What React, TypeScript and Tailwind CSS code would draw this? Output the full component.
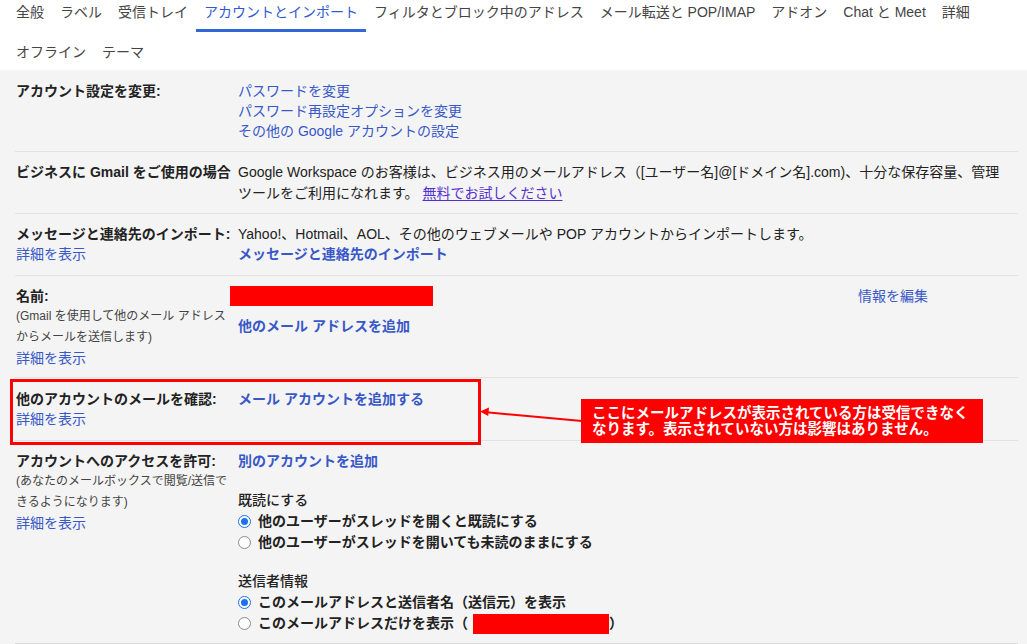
import React from "react";

const tabsTop = ["全般", "ラベル", "受信トレイ", "アカウントとインポート", "フィルタとブロック中のアドレス", "メール転送と POP/IMAP", "アドオン", "Chat と Meet", "詳細"];
const tabsBottom = ["オフライン", "テーマ"];

const link = "text-[#3858c8]";

function Radio({ checked }: { checked?: boolean }) {
  return checked ? (
    <span className="mr-[7px] inline-flex h-[13px] w-[13px] shrink-0 items-center justify-center rounded-full border border-[#1a73e8] bg-white">
      <span className="h-[7px] w-[7px] rounded-full bg-[#1a73e8]" />
    </span>
  ) : (
    <span className="mr-[7px] inline-block h-[13px] w-[13px] shrink-0 rounded-full border border-[#8a8a8a] bg-white" />
  );
}

function More() {
  return <div className={`leading-[20px] ${link}`}>詳細を表示</div>;
}

export default function App() {
  return (
    <div className="relative h-[644px] w-[1027px] overflow-hidden bg-white font-[family-name:Liberation_Sans,Noto_Sans_CJK_JP,sans-serif] text-[14px] text-[#222]">
      {/* tabs */}
      <div className="flex h-[70px] flex-col gap-[8px] pl-2">
        <div className="flex">
          {tabsTop.map((t, i) => (
            <div
              key={t}
              className={`h-[32px] border-b-[3px] px-2 leading-[24px] whitespace-nowrap ${
                i === 3 ? "border-[#3367d6] text-[#2f5bd2]" : "border-transparent text-[#444]"
              }`}
            >
              {t}
            </div>
          ))}
        </div>
        <div className="flex">
          {tabsBottom.map((t) => (
            <div key={t} className="h-[24px] px-2 leading-[24px] text-[#444]">
              {t}
            </div>
          ))}
        </div>
      </div>

      {/* settings */}
      <div className="h-[574px] bg-[#f4f4f4] pl-[15px] pr-[9px]">
        <div className="flex border-b border-[#e2e2e2] pt-[11px] pb-[10px] leading-[20px]">
          <div className="w-[223px] pl-px font-bold">アカウント設定を変更:</div>
          <div className={link}>
            <div>パスワードを変更</div>
            <div>パスワード再設定オプションを変更</div>
            <div>その他の Google アカウントの設定</div>
          </div>
        </div>

        <div className="flex border-b border-[#e2e2e2] pt-[10px] pb-[9px] leading-[21px]">
          <div className="w-[223px] pl-px font-bold whitespace-nowrap">ビジネスに Gmail をご使用の場合</div>
          <div className="whitespace-nowrap">
            Google Workspace のお客様は、ビジネス用のメールアドレス（[ユーザー名]@[ドメイン名].com)、十分な保存容量、管理
            <br />
            ツールをご利用になれます。 <span className="text-[#5530d0] underline underline-offset-2">無料でお試しください</span>
          </div>
        </div>

        <div className="flex border-b border-[#e2e2e2] pt-[10px] pb-[11px] leading-[20px]">
          <div className="w-[223px] pl-px">
            <div className="font-bold">メッセージと連絡先のインポート:</div>
            <More />
          </div>
          <div>
            <div>Yahoo!、Hotmail、AOL、その他のウェブメールや POP アカウントからインポートします。</div>
            <div className={`font-bold ${link}`}>メッセージと連絡先のインポート</div>
          </div>
        </div>

        <div className="flex border-b border-[#e2e2e2] pt-[10px] pb-[9px] leading-[20px]">
          <div className="w-[223px] pl-px">
            <div className="font-bold">名前:</div>
            <div className="text-[12px] leading-[21px] text-[#444]">
              (Gmail を使用して他のメール アドレス
              <br />
              からメールを送信します)
            </div>
            <More />
          </div>
          <div className="flex-1">
            <div className="-ml-2 h-[20px] w-[203px] bg-[#ff0000]" />
            <div className={`mt-[10px] font-bold ${link}`}>他のメール アドレスを追加</div>
          </div>
          <div className={`w-[160px] ${link}`}>情報を編集</div>
        </div>

        <div className="flex border-b border-[#e2e2e2] pt-[11px] pb-[11px] leading-[20px]">
          <div className="w-[223px] pl-px">
            <div className="font-bold">他のアカウントのメールを確認:</div>
            <More />
          </div>
          <div className={`font-bold ${link}`}>メール アカウントを追加する</div>
        </div>

        <div className="flex border-b border-[#dcdcdc] pt-[10px] pb-[9px] leading-[20px]">
          <div className="w-[223px] pl-px">
            <div className="font-bold">アカウントへのアクセスを許可:</div>
            <div className="text-[12px] leading-[21px] text-[#444]">
              (あなたのメールボックスで閲覧/送信で
              <br />
              きるようになります)
            </div>
            <More />
          </div>
          <div className="leading-[21px]">
            <div className={`font-bold ${link}`}>別のアカウントを追加</div>
            <div className="mt-[18px] font-medium">既読にする</div>
            <div className="flex items-center font-bold">
              <Radio checked />
              他のユーザーがスレッドを開くと既読にする
            </div>
            <div className="flex items-center font-bold">
              <Radio />
              他のユーザーがスレッドを開いても未読のままにする
            </div>
            <div className="mt-[18px] font-medium">送信者情報</div>
            <div className="flex items-center font-bold">
              <Radio checked />
              このメールアドレスと送信者名（送信元）を表示
            </div>
            <div className="flex items-center font-bold">
              <Radio />
              このメールアドレスだけを表示（
              <span className="ml-[5px] inline-block h-[20px] w-[136px] bg-[#ff0000]" />）
            </div>
          </div>
        </div>
      </div>

      {/* annotation */}
      <div className="absolute left-[10px] top-[379px] h-[66px] w-[471px] border-[3px] border-[#ff0000]" />
      <svg className="absolute left-[478px] top-[402px]" width="106" height="22" viewBox="0 0 106 22">
        <line x1="104" y1="19" x2="6" y2="10" stroke="#ff0000" strokeWidth="2" />
        <path d="M2 9.6 L11 5.5 L10.2 14 Z" fill="#ff0000" />
      </svg>
      <div className="absolute left-[581px] top-[399px] h-[44px] w-[402px] bg-[#ff0000] px-[11px] pt-[6px] text-[14.5px] font-bold leading-[16px] text-white">
        ここにメールアドレスが表示されている方は受信できなく
        <br />
        なります。表示されていない方は影響はありません。
      </div>
    </div>
  );
}
